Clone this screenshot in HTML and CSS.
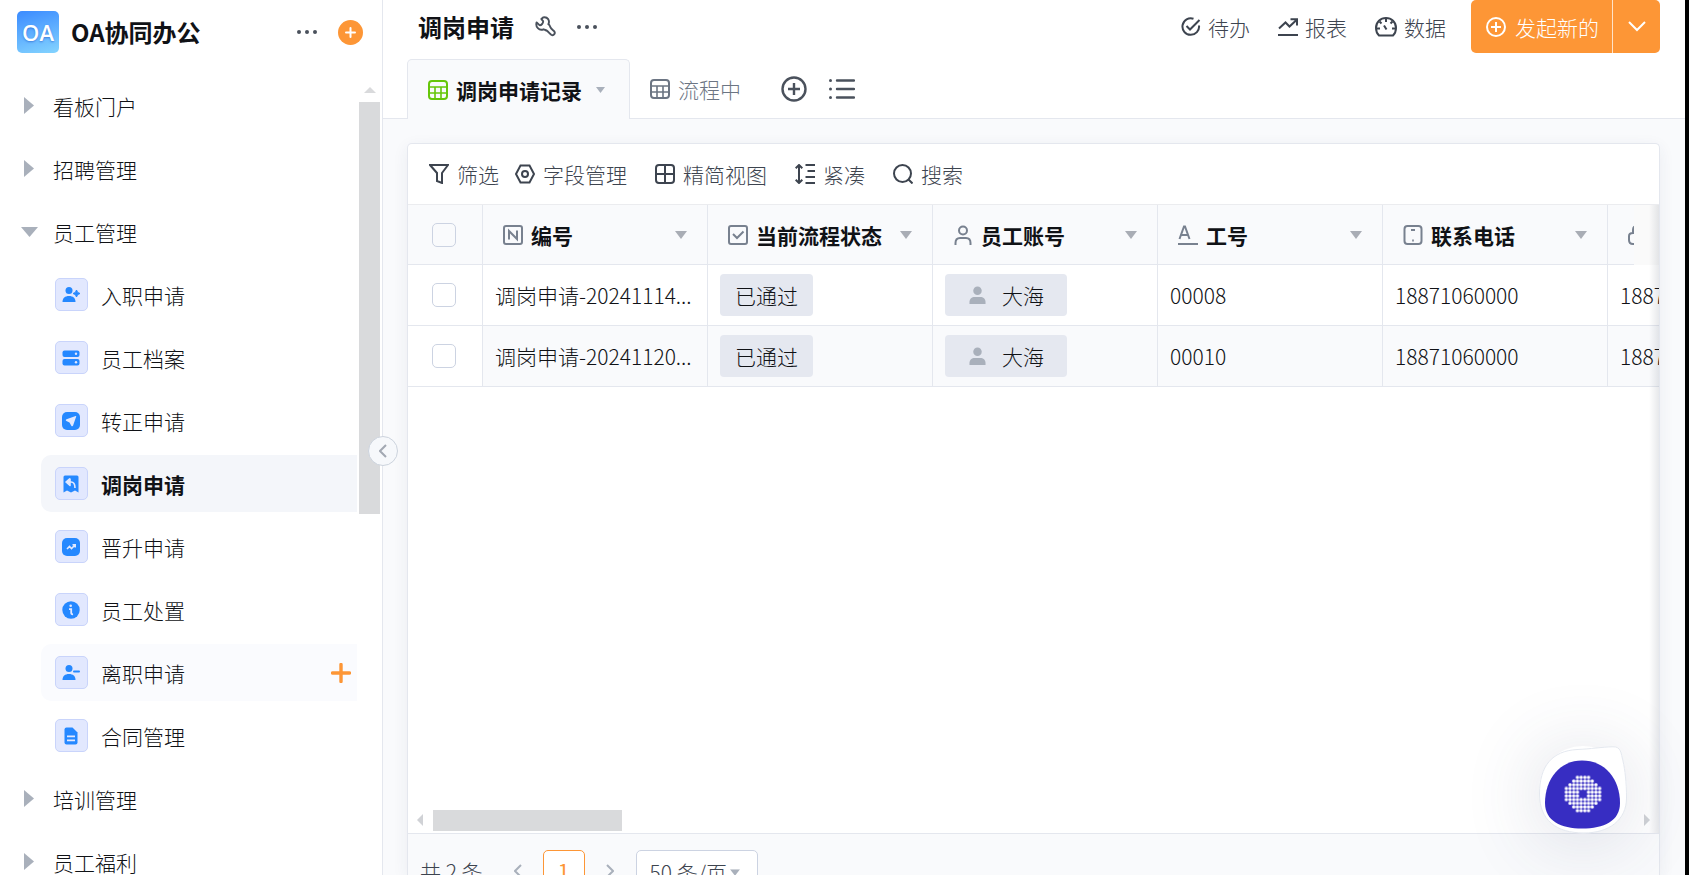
FILE: index.html
```html
<!DOCTYPE html>
<html lang="zh-CN">
<head>
  <meta charset="UTF-8" />
  <meta name="viewport" content="width=device-width, initial-scale=1.0" />
  <title>OA协同办公 - 调岗申请</title>
  <link rel="stylesheet" href="styles.css">
</head>
<body>
  <!-- shared icons -->
  <svg class="sprite" aria-hidden="true">
    <symbol id="i-dots" viewBox="0 0 20 20"><circle cx="2" cy="10" r="2"/><circle cx="10" cy="10" r="2"/><circle cx="18" cy="10" r="2"/></symbol>
    <symbol id="i-right" viewBox="0 0 10 17"><path d="M0 0L10 8.5L0 17Z"/></symbol>
    <symbol id="i-down" viewBox="0 0 12 8"><path d="M0 0H12L6 8Z"/></symbol>
    <symbol id="i-table" viewBox="0 0 20 20"><g fill="none" stroke="currentColor" stroke-width="2"><rect x="1" y="1" width="18" height="18" rx="3"/><path d="M1 7H19M1 13H19M7 7V19M13 7V19" stroke-width="1.6"/></g></symbol>
    <symbol id="i-user" viewBox="0 0 18 20"><circle cx="9" cy="5" r="4.5"/><path d="M0.5 19V17C0.5 13.5 3 11.5 6 11.5H12C15 11.5 17.5 13.5 17.5 17V19Z"/></symbol>
  </svg>

  <aside class="sidebar">
    <div class="brand">
      <span class="logo">OA</span>
      <strong>OA协同办公</strong>
      <button class="icon-btn" aria-label="更多"><svg width="20" height="20"><use href="#i-dots"/></svg></button>
      <button class="add-btn" aria-label="新建"><svg width="11" height="11" viewBox="0 0 11 11"><path d="M5.500 1V10M1 5.500H10" stroke="#fff" stroke-width="2" stroke-linecap="round"/></svg></button>
    </div>
    <div class="menu-wrap">
      <nav class="menu">
        <a class="group" href="#"><span class="arrow"><svg width="10" height="17"><use href="#i-right"/></svg></span>看板门户</a>
        <a class="group" href="#"><span class="arrow"><svg width="10" height="17"><use href="#i-right"/></svg></span>招聘管理</a>
        <a class="group" href="#"><span class="arrow"><svg width="17" height="10" viewBox="0 0 17 10"><path d="M0 0H17L8.500 10Z"/></svg></span>员工管理</a>
        <a class="item" href="#">
          <span class="item-icon"><svg width="18" height="18" viewBox="0 0 18 18"><circle cx="7" cy="4.500" r="3.500"/><path d="M.5 16C.5 12 3 10 7 10S13.500 12 13.500 16Z"/><path d="M14.500 4Q15 7 18 7.500Q15 8 14.500 11Q14 8 11 7.500Q14 7 14.500 4Z" stroke="#2588ff"/></svg></span>入职申请</a>
        <a class="item" href="#">
          <span class="item-icon"><svg width="18" height="18" viewBox="0 0 18 18"><rect x=".5" y="1.500" width="17" height="6.500" rx="2"/><rect x=".5" y="10" width="17" height="6.500" rx="2"/><g fill="#e2e8fe"><circle cx="14" cy="4.700" r="1.200"/><circle cx="14" cy="13.300" r="1.200"/></g></svg></span>员工档案</a>
        <a class="item" href="#">
          <span class="item-icon"><svg width="18" height="18" viewBox="0 0 18 18"><rect width="18" height="18" rx="5"/><path d="M13.700 4L4.500 7.200C3.500 7.600 3.600 8.500 4.400 9L7.500 10.500L9.300 13.700C9.900 14.600 10.800 14.500 11.100 13.500L14.200 4.500C14.300 4 14.100 3.900 13.700 4Z" fill="#e2e8fe"/></svg></span>转正申请</a>
        <a class="item active" href="#">
          <span class="item-icon"><svg width="18" height="18" viewBox="0 0 18 18"><path d="M1.500 2Q1.500 .5 3 .5H15Q16.500 .5 16.500 2V17.500L13 15.500L9 17.500L5 15.500L1.500 17.500Z"/><path d="M8 3.500L4 7L8 10.500V3.500M7 7H9Q13 7 13 13" fill="none" stroke="#e2e8fe" stroke-width="1.600" stroke-linejoin="round"/><path d="M8 3.500L4 7L8 10.500Z" fill="#e2e8fe"/></svg></span>调岗申请</a>
        <a class="item" href="#">
          <span class="item-icon"><svg width="18" height="18" viewBox="0 0 18 18"><rect width="18" height="18" rx="5"/><path d="M5 11L7.500 8.500L9.500 10.500L13 7M10.500 6.800H13.200V9.500" fill="none" stroke="#e2e8fe" stroke-width="1.600"/></svg></span>晋升申请</a>
        <a class="item" href="#">
          <span class="item-icon"><svg width="18" height="18" viewBox="0 0 18 18"><circle cx="9" cy="9" r="8.700"/><circle cx="8.700" cy="4.800" r="1.300" fill="#e2e8fe"/><path d="M7 8.200H9.200V12Q9.200 13.500 11 13.200" fill="none" stroke="#e2e8fe" stroke-width="1.800"/></svg></span>员工处置</a>
        <a class="item hover" href="#">
          <span class="item-icon"><svg width="18" height="18" viewBox="0 0 18 18"><circle cx="7" cy="4.500" r="3.500"/><path d="M.5 16C.5 12 3 10 7 10S13.500 12 13.500 16Z"/><rect x="11" y="6.500" width="7" height="2" rx="1"/></svg></span>离职申请
          <svg class="plus" width="20" height="20" viewBox="0 0 20 20"><path d="M10 1.500V18.500M1.500 10H18.500" stroke="#fd9636" stroke-width="3.400" stroke-linecap="round"/></svg></a>
        <a class="item" href="#">
          <span class="item-icon"><svg width="18" height="18" viewBox="0 0 18 18"><path d="M2.500 2.500Q2.500 .5 4.500 .5H10.500L15.500 5.500V15.500Q15.500 17.500 13.500 17.500H4.500Q2.500 17.500 2.500 15.500Z"/><path d="M5 9.300H13M5 13.300H13" stroke="#e2e8fe" stroke-width="1.700"/></svg></span>合同管理</a>
        <a class="group" href="#"><span class="arrow"><svg width="10" height="17"><use href="#i-right"/></svg></span>培训管理</a>
        <a class="group" href="#"><span class="arrow"><svg width="10" height="17"><use href="#i-right"/></svg></span>员工福利</a>
      </nav>
      <div class="vbar">
        <svg width="12" height="6" viewBox="0 0 12 6"><path d="M6 0L12 6H0Z"/></svg>
        <div class="thumb"></div>
      </div>
    </div>
    <button class="collapse" aria-label="收起"><svg width="8" height="14" viewBox="0 0 8 14"><path d="M7 1L1 7L7 13"/></svg></button>
  </aside>

  <main>
    <header class="top">
      <h1>调岗申请</h1>
      <button class="icon-btn" aria-label="设置"><svg width="21" height="21" viewBox="0 0 22 22"><path d="M8.500 1.500C10.500 1 12.500 1.500 13.800 3.300C14.900 5 14.900 6.800 14 8.600C15.500 9.300 15.700 10.700 16.200 12C16.700 13.300 18.500 14.600 19.800 15.700C22 17.800 19.600 21.200 17 19.600C15.700 18.700 14.300 16.900 12.900 15.800C11.700 14.900 10.500 14.700 9 13.900C7 14.800 4.500 14.400 3 12.800C1.300 11 1 9 1.700 6.700L4.700 9.600C6.500 10 8.900 7.400 8.500 5.300L6.700 3.200Z" fill="none" stroke="currentColor" stroke-width="2" stroke-linejoin="round"/></svg></button>
      <button class="icon-btn" aria-label="更多"><svg width="20" height="20"><use href="#i-dots"/></svg></button>
      <div class="links">
        <a href="#"><svg width="20" height="20" viewBox="0 0 20 20"><path d="M12.500 1.700A8.300 8.300 0 1 0 18 8.500M5.500 9L9 12.500L18.500 3"/></svg>待办</a>
        <a href="#"><svg width="20" height="20" viewBox="0 0 20 20"><path d="M0 18H20M1 11.500L7.500 5.500L11.500 9.500L18.500 3M12.500 2.300H19V8.500"/></svg>报表</a>
        <a href="#"><svg width="22" height="20" viewBox="0 0 22 20"><path d="M4 18.500C2 16.500 1 14 1 11C1 5 5.500 1 11 1S21 5 21 11C21 14 20 16.500 18 18.500Z"/><path d="M11 1V5M1.500 11.500H5M17 11.500H20.500M4.500 4.500L6.500 6.500M17.500 4.500L15.500 6.500M9 8.500L11.500 12.500"/></svg>数据</a>
      </div>
      <div class="create">
        <button class="create-main"><svg width="20" height="20" viewBox="0 0 20 20"><circle cx="10" cy="10" r="9"/><path d="M10 5V15M5 10H15"/></svg>发起新的</button>
        <button class="create-more" aria-label="更多新建"><svg width="18" height="11" viewBox="0 0 18 11"><path d="M1 1L9 9L17 1"/></svg></button>
      </div>
    </header>

    <div class="tabs">
      <button class="tab current"><svg class="green" width="20" height="20"><use href="#i-table"/></svg>调岗申请记录<svg class="caret" width="9" height="6" viewBox="0 0 12 8"><use href="#i-down"/></svg></button>
      <button class="tab"><svg width="20" height="20"><use href="#i-table"/></svg>流程中</button>
      <button class="icon-btn" aria-label="添加视图"><svg width="26" height="26" viewBox="0 0 26 26"><path d="M13 7V19M7 13H19" stroke="currentColor" stroke-width="2.400"/><circle cx="13" cy="13" r="11.500" fill="none" stroke="currentColor" stroke-width="2.400"/></svg></button>
      <button class="icon-btn" aria-label="视图列表"><svg width="26" height="20" viewBox="0 0 26 20"><path d="M8 1.500H25M8 10H25M8 18.500H25" stroke="currentColor" stroke-width="2.400" stroke-linecap="round"/><circle cx="1.500" cy="1.500" r="1.500"/><circle cx="1.500" cy="10" r="1.500"/><circle cx="1.500" cy="18.500" r="1.500"/></svg></button>
    </div>

    <section class="card">
      <div class="toolbar">
        <button class="filter"><svg width="20" height="20" viewBox="0 0 20 20"><path d="M1 1H19L13 9V19L8 17V9Z"/></svg>筛选</button>
        <button><svg width="20" height="20" viewBox="0 0 20 20"><path d="M5.500 1.500H14.500L19 10L14.500 18.500H5.500L1 10Z"/><circle cx="10" cy="10" r="3"/></svg>字段管理</button>
        <button><svg width="20" height="20" viewBox="0 0 20 20"><rect x="1" y="1" width="18" height="18" rx="3"/><path d="M10 1V19M1 10H19"/></svg>精简视图</button>
        <button><svg width="20" height="20" viewBox="0 0 20 20"><path d="M4 1V19M.7 4.300L4 1L7.300 4.300M.7 15.700L4 19L7.300 15.700M10.500 1H20M12.500 7H20M10.500 13H20M10.500 19H20"/></svg>紧凑</button>
        <button><svg width="20" height="20" viewBox="0 0 20 20"><circle cx="9.500" cy="9.500" r="8.500"/><path d="M15.500 15.500L19.500 19.500"/></svg>搜索</button>
      </div>

      <div class="records">
        <div class="table-wrap">
          <table>
            <thead>
              <tr>
                <th class="check"><input type="checkbox" aria-label="全选"></th>
                <th><div class="th"><svg width="20" height="20" viewBox="0 0 20 20"><rect x="1" y="1" width="18" height="18" rx="2"/><path d="M6 14.500V6L14 14V5.500"/></svg>编号<svg class="sort" width="12" height="8"><use href="#i-down"/></svg></div></th>
                <th><div class="th"><svg width="20" height="20" viewBox="0 0 20 20"><rect x="1" y="1" width="18" height="18" rx="2"/><path d="M5 9L9 13L15.500 6.500"/></svg>当前流程状态<svg class="sort" width="12" height="8"><use href="#i-down"/></svg></div></th>
                <th><div class="th"><svg width="20" height="20" viewBox="0 0 20 20"><circle cx="10" cy="5.500" r="4"/><path d="M2.500 20V18Q2.500 13 7 13H13Q17.500 13 17.500 18V20"/></svg>员工账号<svg class="sort" width="12" height="8"><use href="#i-down"/></svg></div></th>
                <th><div class="th"><svg width="20" height="20" viewBox="0 0 20 20"><path d="M0 19H20M1.500 14L6 1.500H7L11.500 14M3 10H10"/></svg>工号<svg class="sort" width="12" height="8"><use href="#i-down"/></svg></div></th>
                <th><div class="th"><svg width="20" height="20" viewBox="0 0 20 20"><rect x="1.500" y="1" width="17" height="18" rx="3"/><path d="M8 5H12M9.200 15.500H10.800"/></svg>联系电话<svg class="sort" width="12" height="8"><use href="#i-down"/></svg></div></th>
                <th><div class="th"><svg width="20" height="20" viewBox="0 0 20 20"><path d="M5 8V5Q5 1 9 1M5 8H15Q19 8 19 12V19H5Q1 19 1 15V11Q1 8 5 8Z"/></svg></div></th>
              </tr>
            </thead>
            <tbody>
              <tr>
                <td class="check"><input type="checkbox" aria-label="选择第1行"></td>
                <td>调岗申请-20241114...</td>
                <td><span class="tag">已通过</span></td>
                <td><span class="tag user"><svg width="17" height="19" viewBox="0 0 18 20"><use href="#i-user"/></svg>大海</span></td>
                <td>00008</td>
                <td>18871060000</td>
                <td>18871060000</td>
              </tr>
              <tr>
                <td class="check"><input type="checkbox" aria-label="选择第2行"></td>
                <td>调岗申请-20241120...</td>
                <td><span class="tag">已通过</span></td>
                <td><span class="tag user"><svg width="17" height="19" viewBox="0 0 18 20"><use href="#i-user"/></svg>大海</span></td>
                <td>00010</td>
                <td>18871060000</td>
                <td>18871060000</td>
              </tr>
            </tbody>
          </table>
        </div>

        <div class="hbar">
          <svg width="6" height="12" viewBox="0 0 6 12"><path d="M6 0V12L0 6Z"/></svg>
          <div class="thumb"></div>
          <svg class="end" width="6" height="12" viewBox="0 0 6 12"><path d="M0 0L6 6L0 12Z"/></svg>
        </div>
      </div>

      <footer class="pager">
        <span>共 2 条</span>
        <button class="step" aria-label="上一页"><svg width="8" height="14" viewBox="0 0 8 14"><path d="M7 1L1 7L7 13"/></svg></button>
        <button class="page">1</button>
        <button class="step" aria-label="下一页"><svg width="8" height="14" viewBox="0 0 8 14"><path d="M1 1L7 7L1 13"/></svg></button>
        <div class="size">
          <select aria-label="每页条数"><option>50 条/页</option></select>
          <svg width="10" height="7" viewBox="0 0 12 8"><use href="#i-down"/></svg>
        </div>
      </footer>
    </section>
  </main>

  <button class="chat" aria-label="客服">
    <svg width="88" height="88" viewBox="0 0 88 88">
      <defs>
        <pattern id="dots" width="3.700" height="3.700" patternUnits="userSpaceOnUse" x="25.500" y="29.500"><circle cx="1.850" cy="1.850" r="1.700" fill="#fff"/></pattern>
      </defs>
      <path d="M.5 48C.5 20 13 5 38 3.500C52 3 62 1 74 .8C82 .5 82 7 84 15C86 24 87.500 36 87.500 52C87.500 74 70 87 45 87C17 87 .5 74 .5 48Z" fill="#fff" stroke="#e4e8ef"/>
      <path d="M6 57C6 33 21 14.500 43 14.500C66 14.500 81 33 81 57C81 75 65 82.500 43 82.500C22 82.500 6 75 6 57Z" fill="#372dc2"/>
      <path d="M36.600 29.500H51.400V33.200H55.100V36.900H58.800V40.600H62.500V55.400H58.800V59.100H55.100V62.800H51.400V66.500H36.600V62.800H32.900V59.100H29.200V55.400H25.500V40.600H29.200V36.900H32.900V33.200H36.600Z" fill="url(#dots)"/>
      <rect x="40.300" y="44.300" width="7.400" height="7.400" fill="#372dc2"/>
    </svg>
  </button>
</body>
</html>
```

FILE: styles.css
```css
* {
  box-sizing: border-box;
}
body {
  margin: 0;
  height: 100vh;
  display: flex;
  overflow: hidden;
  border-right: 4px solid #000;
  background: #fff;
  color: #101216;
  font-family: "Noto Sans CJK SC", sans-serif;
  font-size: 21px;
  font-weight: 300;
  line-height: 30px;
}
a {
  color: inherit;
  text-decoration: none;
}
button {
  display: flex;
  align-items: center;
  padding: 0;
  border: 0;
  background: none;
  color: inherit;
  font: inherit;
  cursor: pointer;
}
svg {
  flex: none;
}
.sprite {
  position: absolute;
  width: 0;
  height: 0;
}
.icon-btn {
  color: #4a515c;
  fill: #4a515c;
}

/* sidebar */
.sidebar {
  position: relative;
  flex: none;
  width: 383px;
  display: flex;
  flex-direction: column;
  border-right: 1px solid #e4e7ee;
}
.brand {
  flex: none;
  height: 77px;
  display: flex;
  align-items: flex-start;
  padding: 11px 19px 0 17px;
}
.brand > * {
  height: 42px;
}
.brand strong {
  margin: 0 auto 0 12px;
  font-size: 24px;
  font-weight: 700;
  line-height: 42px;
}
.logo {
  width: 42px;
  border-radius: 5px;
  background: linear-gradient(165deg, #3b8bff, #84d4ff);
  color: #fff;
  font-family: "Open Sans", sans-serif;
  font-size: 22px;
  font-weight: 600;
  line-height: 42px;
  text-align: center;
  text-shadow: 0 1px 2px rgba(20, 70, 190, 0.5);
}
.brand .add-btn {
  width: 25px;
  height: 25px;
  margin: 9px 0 0 21px;
  justify-content: center;
  border-radius: 50%;
  background: #fd9636;
}
.menu-wrap {
  flex: 1;
  min-height: 0;
  display: flex;
}
.menu {
  flex: 1;
  display: flex;
  flex-direction: column;
  gap: 6px;
  overflow: hidden;
}
.group,
.item {
  flex: none;
  height: 57px;
  display: flex;
  align-items: center;
}
.group {
  padding-left: 17px;
}
.arrow {
  width: 24px;
  display: flex;
  justify-content: center;
  margin-right: 12px;
  fill: #a9b0bb;
}
.item {
  margin-left: 41px;
  padding: 0 6px 0 14px;
  border-radius: 10px 0 0 10px;
}
.item.active {
  background: #f4f6fa;
  font-weight: 700;
}
.item.hover {
  background: #fafbfe;
}
.item-icon {
  width: 33px;
  height: 33px;
  margin-right: 13px;
  display: flex;
  align-items: center;
  padding-left: 6px;
  border: 1px solid #c9d4fb;
  border-radius: 5px;
  background: #e2e8fe;
  fill: #2588ff;
}
.plus {
  margin-left: auto;
}
.vbar {
  width: 23px;
  display: flex;
  flex-direction: column;
  align-items: center;
  gap: 9px;
  margin-left: 2px;
  padding: 10px 2px 0 0;
  fill: #d9dadc;
}
.vbar .thumb {
  width: 21px;
  height: 412px;
  background: #d9dadc;
}
.collapse {
  position: absolute;
  top: 436px;
  right: -16px;
  width: 30px;
  height: 30px;
  justify-content: center;
  border: 1px solid #ccd3dd;
  border-radius: 50%;
  background: #f6f8fb;
  fill: none;
  stroke: #a2a8b2;
  stroke-width: 2;
}

/* header and tabs */
main {
  flex: 1;
  min-width: 0;
  display: flex;
  flex-direction: column;
  background: #f9fafc;
}
.top {
  flex: none;
  height: 59px;
  display: flex;
  align-items: flex-start;
  padding: 0 25px 0 35px;
  background: #fff;
}
.top > * {
  height: 53px;
}
h1 {
  margin: 0 21px 0 0;
  font-size: 24px;
  line-height: 53px;
}
.top .icon-btn {
  margin-right: 21px;
}
.links {
  display: flex;
  gap: 28px;
  margin-left: auto;
  margin-right: 25px;
  color: #3d444f;
}
.links a {
  display: flex;
  align-items: center;
  gap: 7px;
}
.links svg,
.toolbar svg {
  fill: none;
  stroke: currentColor;
  stroke-width: 2;
}
.create {
  display: flex;
  border-radius: 5px;
  overflow: hidden;
  background: #fd9636;
  color: #fff;
}
.create svg {
  fill: none;
  stroke: #fff;
  stroke-width: 2;
}
.create-main {
  gap: 9px;
  padding: 0 13px 0 15px;
  border-right: 1px solid #ffe3c8;
}
.create-more {
  width: 47px;
  justify-content: center;
}
.tabs {
  flex: none;
  height: 60px;
  display: flex;
  padding-left: 24px;
  background: #fff;
  border-bottom: 1px solid #e4e7ee;
}
.tab {
  gap: 8px;
  height: 60px;
  padding: 0 20px;
  color: #6c7583;
}
.tab.current {
  border: 1px solid #e4e7ee;
  border-bottom: 0;
  border-radius: 5px 5px 0 0;
  background: #f9fafc;
  color: #101216;
  font-weight: 700;
}
.green {
  color: #66c60a;
}
.caret {
  margin: 0 4px 0 6px;
  fill: #a9b0bb;
}
.tabs .icon-btn {
  margin-left: 22px;
}
.tabs .tab + .icon-btn {
  margin-left: 20px;
}

/* record list */
.card {
  flex: 1;
  min-height: 0;
  display: flex;
  flex-direction: column;
  margin: 24px 25px 0 24px;
  border: 1px solid #e4e7ee;
  border-bottom: 0;
  border-radius: 5px 5px 0 0;
  background: #fff;
  box-shadow: 0 4px 16px rgba(40, 60, 100, 0.07);
}
.toolbar {
  flex: none;
  height: 61px;
  display: flex;
  gap: 28px;
  padding-left: 21px;
  border-bottom: 1px solid #ebecef;
  color: #3d444f;
}
.toolbar button {
  gap: 8px;
}
.toolbar .filter {
  margin-right: -12px;
}
.records {
  position: relative;
  flex: 1;
  min-height: 0;
  display: flex;
  flex-direction: column;
}
/* header end cap and the fade on the right edge */
.records::before {
  content: "";
  position: absolute;
  top: 0;
  right: 0;
  width: 25px;
  height: 60px;
  background: #fafafa;
}
.records::after {
  content: "";
  position: absolute;
  top: 0;
  right: 0;
  bottom: 0;
  width: 10px;
  background: linear-gradient(to right, rgba(60, 70, 90, 0), rgba(60, 70, 90, 0.12));
}
.table-wrap {
  flex: 1;
  min-height: 0;
  overflow: hidden;
}
table {
  width: 1425px;
  table-layout: fixed;
  border-collapse: separate;
  border-spacing: 0;
}
th,
td {
  width: 225px;
  height: 61px;
  padding: 0 12px;
  border-right: 1px solid #e4e7ee;
  border-bottom: 1px solid #e4e7ee;
  text-align: left;
  white-space: nowrap;
}
th {
  height: 60px;
  background: #f9fafc;
}
.check {
  width: 75px;
  padding: 0 0 0 24px;
}
tbody tr:nth-child(even) td:not(.check) {
  background: #f9fafc;
}
.th {
  display: flex;
  align-items: center;
  gap: 8px;
  padding: 0 8px;
}
.th svg {
  fill: none;
  stroke: #78818f;
  stroke-width: 2;
}
.th .sort {
  margin-left: auto;
  fill: #a9adb5;
  stroke: none;
}
input[type="checkbox"] {
  appearance: none;
  display: block;
  width: 24px;
  height: 24px;
  margin: 0;
  border: 1px solid #ccd3e2;
  border-radius: 5px;
}
.tag {
  display: inline-flex;
  align-items: center;
  height: 42px;
  padding: 0 15px;
  border-radius: 4px;
  background: #e5e8f0;
  vertical-align: middle;
}
.tag.user {
  gap: 16px;
  padding: 0 23px 0 24px;
  fill: #a9b0bb;
}
.hbar {
  flex: none;
  height: 26px;
  display: flex;
  align-items: center;
  gap: 10px;
  padding: 0 9px;
  fill: #d0d2d6;
}
.hbar .thumb {
  width: 189px;
  height: 21px;
  background: #d9dadc;
}
.hbar .end {
  margin-left: auto;
}
.pager {
  flex: none;
  height: 42px;
  display: flex;
  align-items: flex-start;
  overflow: hidden;
  padding: 16px 12px 0;
  border-top: 1px solid #e4e7ee;
  background: #f9fafc;
  color: #3d444f;
}
.pager > * {
  flex: none;
  height: 42px;
  line-height: 42px;
}
.step {
  width: 50px;
  justify-content: center;
  fill: none;
  stroke: #a9b0bb;
  stroke-width: 2;
}
.pager span {
  margin-right: 10px;
}
.page {
  width: 42px;
  justify-content: center;
  border: 1px solid #fd9636;
  border-radius: 5px;
  background: #fff;
  color: #fd9636;
  font-weight: 400;
}
.size {
  position: relative;
  margin-left: 1px;
}
.size select {
  appearance: none;
  width: 122px;
  height: 42px;
  padding: 0 0 0 13px;
  border: 1px solid #ccd3e2;
  border-radius: 5px;
  background: #fff;
  color: inherit;
  font: inherit;
}
.size svg {
  position: absolute;
  top: 19px;
  right: 18px;
  fill: #a9b0bb;
}
.chat {
  position: fixed;
  right: 62px;
  bottom: 41px;
  border-radius: 50%;
  box-shadow: 0 6px 80px rgba(60, 70, 110, 0.2);
}
```
